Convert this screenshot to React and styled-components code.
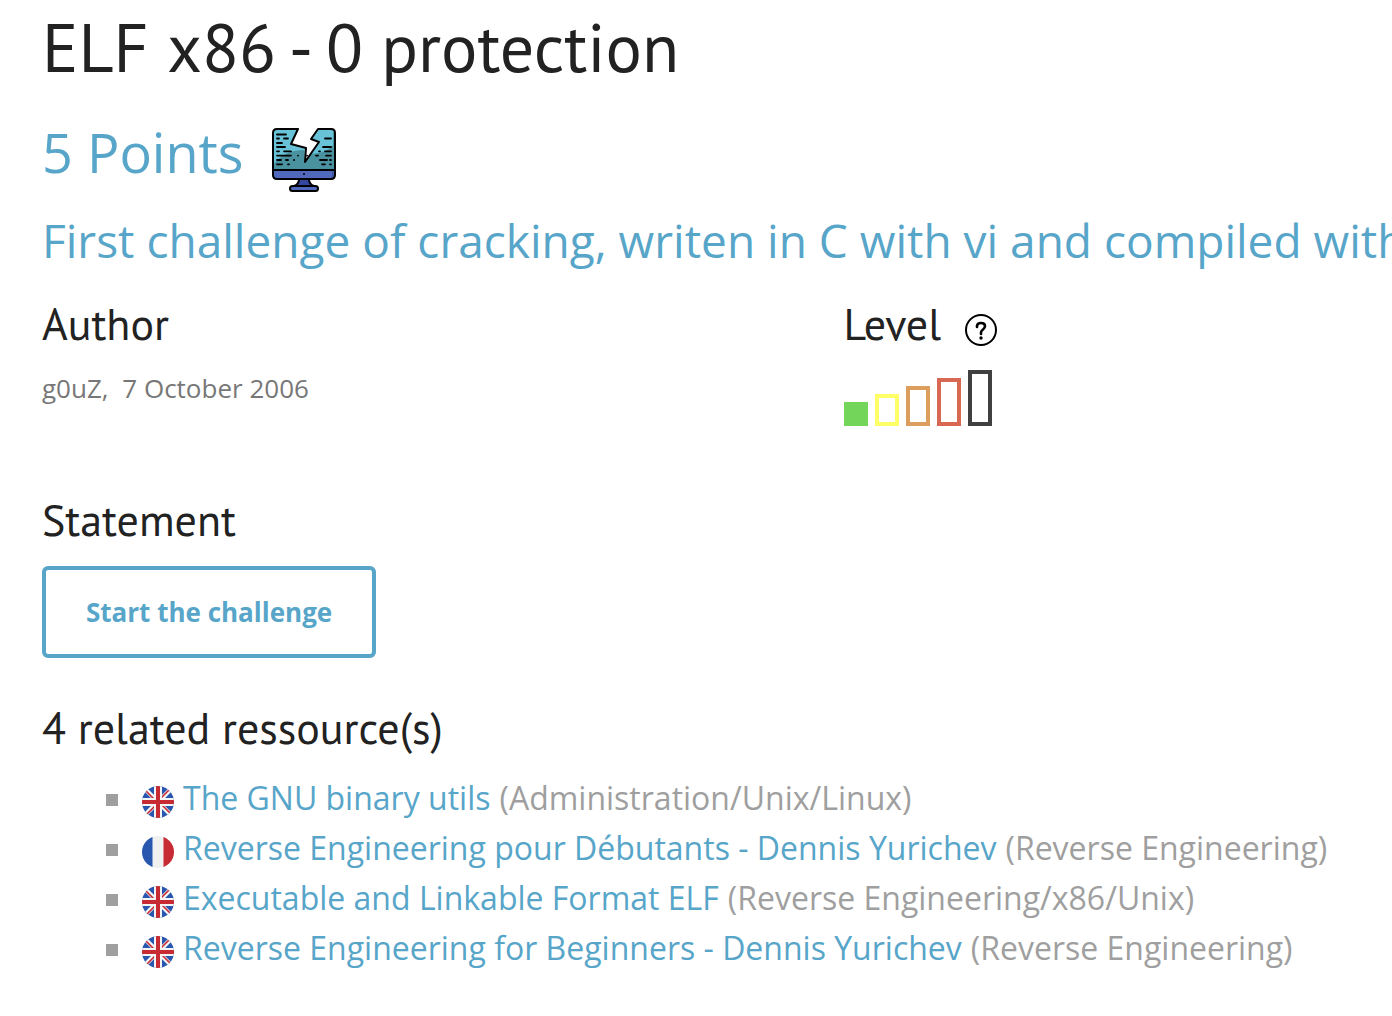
import { useId } from "react";
import styled, { createGlobalStyle } from "styled-components";

const GlobalStyle = createGlobalStyle`
  * {
    box-sizing: border-box;
  }
  body {
    margin: 0;
    background: #ffffff;
    color: #222222;
    font-family: "Open Sans", "Noto Sans", sans-serif;
    overflow-x: hidden;
  }
`;

const Page = styled.main`
  padding: 0 14px 40px 42px;
`;
const Title = styled.h1`
  margin: 0;
  padding-top: 2px;
  font-family: "PT Sans", Lato, sans-serif;
  font-size: 68px;
  font-weight: 400;
  line-height: 90px;
`;
const Points = styled.h2`
  display: flex;
  align-items: center;
  gap: 28px;
  margin: 22px 0 0;
  color: #57a5c9;
  font-size: 54px;
  font-weight: 400;
  line-height: 76px;
`;
const Summary = styled.h3`
  margin: 18px 0 0;
  color: #57a5c9;
  font-size: 46px;
  font-weight: 400;
  line-height: 64px;
  white-space: nowrap;
`;
const Heading = styled.h4`
  display: flex;
  align-items: center;
  gap: 24px;
  margin: 0;
  font-family: "PT Sans", Lato, sans-serif;
  font-size: 44px;
  font-weight: 400;
  line-height: 60px;
`;
const Details = styled.div`
  display: grid;
  grid-template-columns: 3fr 2fr;
  margin-top: 22px;
`;
const AuthorLine = styled.p`
  margin: 14px 0 0;
  color: #777777;
  font-size: 26px;
  line-height: 40px;
`;
const AuthorLink = styled.a`
  margin-right: 7px;
  color: inherit;
  text-decoration: none;
`;
const ScreenIcon = styled.svg`
  width: 64px;
  height: 64px;
  margin-top: 14px;
  margin-bottom: -2px;
`;
const HelpLink = styled.a`
  display: flex;
  padding-top: 12px;
  color: #000000;
`;
const Bars = styled.div`
  display: flex;
  align-items: flex-end;
  gap: 7px;
  margin-top: 16px;
`;
const Bar = styled.span`
  width: 24px;
  height: ${({ $height }) => $height}px;
  border: 4px solid ${({ $color }) => $color};
  background: ${({ $color, $filled }) => ($filled ? $color : "transparent")};
`;
const Section = styled.section`
  margin-top: ${({ $gap }) => $gap}px;
`;
const StartButton = styled.button`
  margin-top: 16px;
  padding: 22px 40px;
  border: 4px solid #57a5c9;
  border-radius: 6px;
  background: #ffffff;
  color: #57a5c9;
  font-family: inherit;
  font-size: 26px;
  font-weight: 700;
  line-height: 40px;
  cursor: pointer;
`;
const ResourceList = styled.ul`
  margin: 15px 0 0;
  padding: 0 0 0 64px;
  list-style: none;
`;
const Resource = styled.li`
  display: flex;
  align-items: center;
  color: #9f9f9f;
  font-size: 32px;
  line-height: 50px;
  white-space: nowrap;

  &::before {
    content: "";
    width: 12px;
    height: 12px;
    margin-top: 4px;
    margin-right: 24px;
    background: #9f9f9f;
  }
`;
const FlagBox = styled.span`
  display: flex;
  padding-top: 8px;
  margin-right: 9px;
`;
const ResourceLink = styled.a`
  margin-right: 9px;
  color: #57a5c9;
  text-decoration: none;
`;

const levels = [
  { color: "#73d65a", height: 24, filled: true },
  { color: "#ffff66", height: 32 },
  { color: "#dc9e5c", height: 40 },
  { color: "#d96852", height: 48 },
  { color: "#404040", height: 56 },
];

const resources = [
  { lang: "en", title: "The GNU binary utils", topic: "(Administration/Unix/Linux)" },
  { lang: "fr", title: "Reverse Engineering pour Débutants - Dennis Yurichev", topic: "(Reverse Engineering)" },
  { lang: "en", title: "Executable and Linkable Format ELF", topic: "(Reverse Engineering/x86/Unix)" },
  { lang: "en", title: "Reverse Engineering for Beginners - Dennis Yurichev", topic: "(Reverse Engineering)" },
];

function CrackedScreen() {
  return (
    <ScreenIcon viewBox="0 0 64 64" aria-hidden="true">
      <path d="M27 50c0 5-2 7-5 8h20c-3-1-5-3-5-8z" fill="#3548a0" />
      <path d="M1 42h62v5q0 4-4 4H5q-4 0-4-4z" fill="#5069bd" />
      <path d="M60 42h3v5q0 4-4 4h-3q4 0 4-4z" fill="#4257a8" />
      <path d="M5 1h21l-7 15 15 4-2 14V42H1V5q0-4 4-4z" fill="#69c3d8" />
      <path d="M46 1h13q4 0 4 4v37H31l1-8 15-20-8-2z" fill="#69c3d8" />
      <path d="M1 42V37Q12 22 32 22l1 12 6-8q16-1 22-9V4l2 1v37z" fill="#4a929f" />
      <path d="M26 1h20l-7 10 8 3-14 20 1-14-15-4z" fill="#ffffff" />
      <g fill="none" stroke="#000000" strokeWidth="2" strokeLinecap="round" strokeLinejoin="round">
        <path d="M26 1H5Q1 1 1 5v42q0 4 4 4h54q4 0 4-4V5q0-4-4-4H46l-7 10 8 3-14 20 1-14-15-4z" />
        <path d="M1 42h62M27 51c0 4-2 6-5 7M37 51c0 4 2 6 5 7" />
        <rect x="18" y="58" width="28" height="5" rx="2.500" fill="#5069bd" />
        <path
          strokeWidth="1.800"
          d="M5 6.500h9M5 10.500h2M12 10.500h4M5 15h5M5 19h8M5 23.300h2M12 23.300h7M5 27.600h14M26 27.600h.1M5 32h4M14 32h2M22 32h.1M5 36.300h5M16 36.300h1M53 10.500h6M51 19h8M47 23.300h1M53 23.300h6M35 27.600h.1M44 27.600h2M54 27.600h5M48 32h7M58 32h1M50 36.300h3M58 36.300h1"
        />
      </g>
      <circle cx="32" cy="46" r="1" />
    </ScreenIcon>
  );
}

function HelpIcon() {
  return (
    <svg width="32" height="32" viewBox="0 0 32 32" fill="none" stroke="currentColor" aria-hidden="true">
      <circle cx="16" cy="16" r="15" strokeWidth="2" />
      <path d="M12 13v-1q0-3 4-3t4 3q0 2-2 3.500t-2 3V20" strokeWidth="2.600" strokeLinecap="round" />
      <circle cx="16" cy="24" r="1.700" fill="currentColor" stroke="none" />
    </svg>
  );
}

function Flag({ lang }) {
  const clip = useId();
  return (
    <svg width="32" height="32" viewBox="0 0 32 32" role="img" aria-label={lang}>
      <clipPath id={clip}>
        <circle cx="16" cy="16" r="16" />
      </clipPath>
      {lang === "fr" ? (
        <g clipPath={`url(#${clip})`}>
          <path d="M0 0h32v32H0z" fill="#f0f0f0" />
          <path d="M0 0h10.500v32H0z" fill="#2956ae" />
          <path d="M21.500 0H32v32H21.500z" fill="#c82a34" />
        </g>
      ) : (
        <g clipPath={`url(#${clip})`}>
          <path d="M0 0h32v32H0z" fill="#2956ae" />
          <path d="M2 2l28 28M30 2L2 30" stroke="#f5f5f5" strokeWidth="4.500" />
          <path d="M4 5l9 9M27 4l-9 9M5 28l9-9M28 27l-9-9" stroke="#c82a34" strokeWidth="1.600" />
          <path d="M16 0v32M0 16h32" stroke="#f5f5f5" strokeWidth="8" />
          <path d="M16 0v32M0 16h32" stroke="#c82a34" strokeWidth="4" />
        </g>
      )}
    </svg>
  );
}

function App() {
  return (
    <>
      <GlobalStyle />
      <Page>
        <Title>ELF x86 - 0 protection</Title>
        <Points>
          5 Points
          <CrackedScreen />
        </Points>
        <Summary>First challenge of cracking, writen in C with vi and compiled with</Summary>
        <Details>
          <div>
            <Heading>Author</Heading>
            <AuthorLine>
              <AuthorLink href="#author">g0uZ,</AuthorLink> 7 October 2006
            </AuthorLine>
          </div>
          <div>
            <Heading>
              Level
              <HelpLink href="#level" aria-label="Level">
                <HelpIcon />
              </HelpLink>
            </Heading>
            <Bars>
              {levels.map((level) => (
                <Bar key={level.color} $color={level.color} $height={level.height} $filled={level.filled} />
              ))}
            </Bars>
          </div>
        </Details>
        <Section $gap={64}>
          <Heading>Statement</Heading>
          <StartButton type="button">Start the challenge</StartButton>
        </Section>
        <Section $gap={40}>
          <Heading>4 related ressource(s)</Heading>
          <ResourceList>
            {resources.map((item) => (
              <Resource key={item.title}>
                <FlagBox>
                  <Flag lang={item.lang} />
                </FlagBox>
                <ResourceLink href="#resource">{item.title}</ResourceLink>
                {item.topic}
              </Resource>
            ))}
          </ResourceList>
        </Section>
      </Page>
    </>
  );
}

export default App;
